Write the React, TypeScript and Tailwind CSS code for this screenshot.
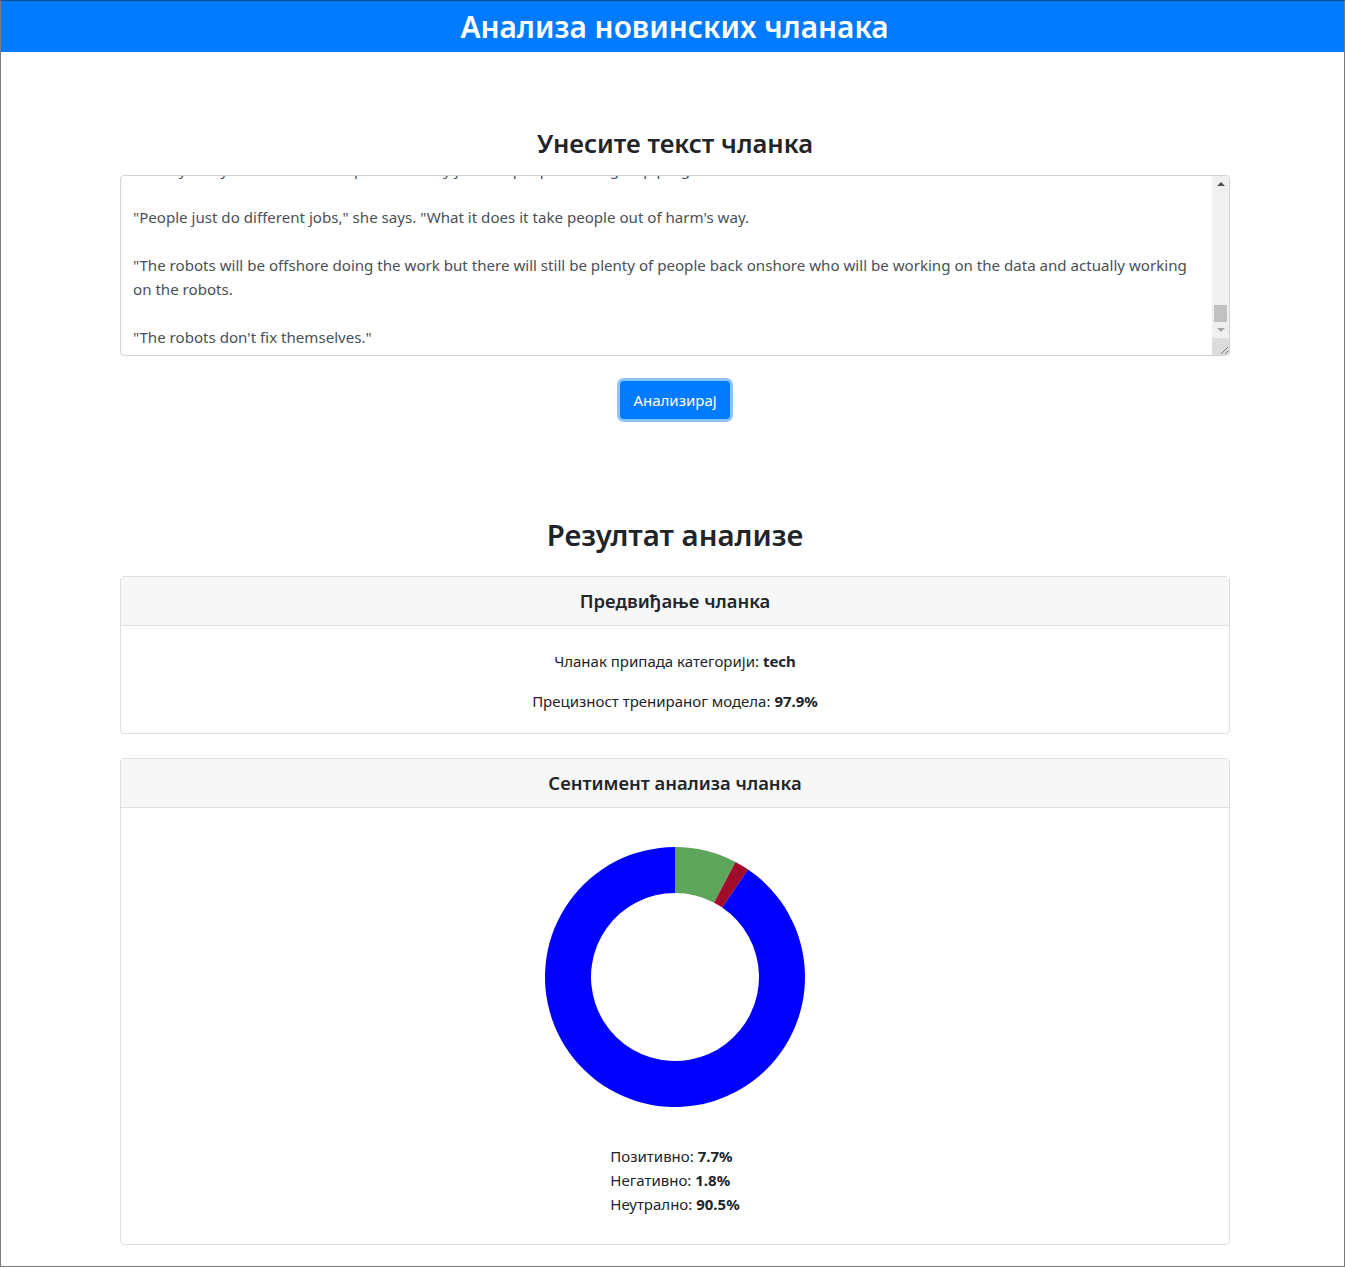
const font = { fontFamily: '"Noto Sans", "Open Sans", sans-serif' };

const Donut = () => {
  const cx = 130;
  const cy = 130;
  const ro = 130;
  const ri = 84;
  const parts = [
    { v: 7.7, c: "#5ca55a" },
    { v: 1.8, c: "#a20c2b" },
    { v: 90.5, c: "#0000ff" },
  ];
  let start = -90;
  const pt = (r: number, a: number) => {
    const rad = (a * Math.PI) / 180;
    return `${cx + r * Math.cos(rad)} ${cy + r * Math.sin(rad)}`;
  };
  return (
    <svg width="260" height="260" viewBox="0 0 260 260">
      {parts.map((p, i) => {
        const sweep = (p.v / 100) * 360;
        const end = start + sweep;
        const large = sweep > 180 ? 1 : 0;
        const d = `M ${pt(ro, start)} A ${ro} ${ro} 0 ${large} 1 ${pt(ro, end)} L ${pt(ri, end)} A ${ri} ${ri} 0 ${large} 0 ${pt(ri, start)} Z`;
        start = end;
        return <path key={i} d={d} fill={p.c} />;
      })}
    </svg>
  );
};

const Card = ({ title, children }: { title: string; children: React.ReactNode }) => (
  <div className="rounded-[4px] border border-[#dfdfdf] bg-white">
    <div className="flex h-[49px] items-center justify-center border-b border-[#dfdfdf] bg-[#f7f7f7] text-[18.4px] font-semibold text-[#212529]">
      {title}
    </div>
    {children}
  </div>
);

export default function App() {
  return (
    <div
      style={font}
      className="box-border h-[1267px] overflow-hidden border border-[#7a7a7a] border-t-[#0b4f8f] bg-white text-[#212529]"
    >
      <header className="flex h-[51px] items-center justify-center bg-[#007bff] pt-[2px] pl-[4px] text-[29.8px] font-semibold text-white">
        Анализа новинских чланака
      </header>

      <main className="ml-[119px] w-[1110px]">
        <h2 className="mt-[75px] text-center text-[25.6px] leading-[34px] font-semibold">Унесите текст чланка</h2>

        <div className="mt-[14px] flex h-[181px] overflow-hidden rounded-[4px] border border-[#ced4da] bg-white">
          <div className="flex-1 overflow-hidden px-3 text-[15.1px] leading-6 text-[#495057]">
            <div className="mt-[-19px]">
              <p>She says they would be able to provide many jobs for people in the group program.</p>
              <p className="mt-6">"People just do different jobs," she says. "What it does it take people out of harm's way.</p>
              <p className="mt-6">
                "The robots will be offshore doing the work but there will still be plenty of people back onshore who will be working on the data and actually working
                on the robots.
              </p>
              <p className="mt-6">"The robots don't fix themselves."</p>
            </div>
          </div>
          <div className="flex w-[17px] flex-col bg-[#f0f0f0]">
            <div className="flex h-[17px] items-center justify-center">
              <div className="h-0 w-0 border-x-[4px] border-b-[4px] border-x-transparent border-b-[#505050]" />
            </div>
            <div className="flex-1 pt-[112px]">
              <div className="mx-auto h-[17px] w-[13px] bg-[#c1c1c1]" />
            </div>
            <div className="flex h-[17px] items-center justify-center">
              <div className="h-0 w-0 border-x-[4px] border-t-[4px] border-x-transparent border-t-[#a3a3a3]" />
            </div>
            <div className="relative h-[17px] bg-[#dcdcdc]">
              <svg className="absolute right-0 bottom-0" width="10" height="10" viewBox="0 0 10 10">
                <path d="M9 2 L2 9 M9 6 L6 9" stroke="#777" strokeWidth="1" />
              </svg>
            </div>
          </div>
        </div>

        <div className="mt-[25px] flex justify-center">
          <button className="h-[38px] rounded-[4px] bg-[#007bff] px-[13.5px] text-[15px] text-white shadow-[0_0_0_3px_rgba(0,123,255,0.45)]">
            Анализирај
          </button>
        </div>

        <h2 className="mt-[97px] text-center text-[29.4px] leading-[38px] font-semibold">Резултат анализе</h2>

        <div className="mt-[22px]">
          <Card title="Предвиђање чланка">
            <div className="flex flex-col items-center gap-4 pt-[23px] pb-[20px] text-[15px] leading-6">
              <p>
                Чланак припада категорији: <b>tech</b>
              </p>
              <p>
                Прецизност тренираног модела: <b>97.9%</b>
              </p>
            </div>
          </Card>
        </div>

        <div className="mt-[24px]">
          <Card title="Сентимент анализа чланка">
            <div className="flex flex-col items-center pt-[39px] pb-[28px]">
              <Donut />
              <div className="mt-[37px] text-[15px] leading-6">
                <p>
                  Позитивно: <b>7.7%</b>
                </p>
                <p>
                  Негативно: <b>1.8%</b>
                </p>
                <p>
                  Неутрално: <b>90.5%</b>
                </p>
              </div>
            </div>
          </Card>
        </div>
      </main>
    </div>
  );
}
